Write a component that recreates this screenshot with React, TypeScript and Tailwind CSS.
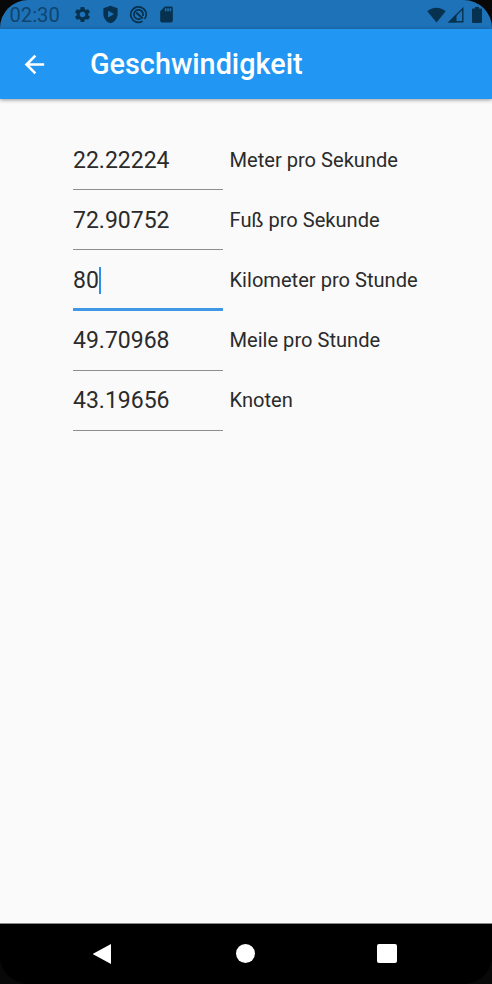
import { useState } from 'react';
import { MdSettings, MdSdCard } from 'react-icons/md';

interface Unit {
  id: string;
  label: string;
  value: string;
}

const units: Unit[] = [
  { id: 'mps', label: 'Meter pro Sekunde', value: '22.22224' },
  { id: 'fps', label: 'Fuß pro Sekunde', value: '72.90752' },
  { id: 'kmh', label: 'Kilometer pro Stunde', value: '80' },
  { id: 'mph', label: 'Meile pro Stunde', value: '49.70968' },
  { id: 'kn', label: 'Knoten', value: '43.19656' },
];

function StatusBar() {
  return (
    <div className="flex h-[29px] shrink-0 items-center bg-[#1e72b8] pr-[10px] pl-[9.5px] text-[#06324f]">
      <span className="w-[63.5px] pt-[2px] text-[20.2px] leading-none text-[#0f4570]">02:30</span>
      <MdSettings className="h-[19px] w-[19px]" />
      <svg viewBox="0 0 24 24" className="ml-[9px] h-[19px] w-[19px]" fill="currentColor">
        <path fillRule="evenodd" d="M12 1L3 4v7c0 5.6 3.8 10.7 9 12 5.2-1.3 9-6.4 9-12V4zM9 7.2l7.5 4.3L9 15.8z" />
      </svg>
      <svg viewBox="0 0 24 24" className="ml-[9px] h-[19px] w-[19px]" fill="none" stroke="currentColor">
        <path strokeWidth="2.2" d="M17 20.5A9.8 9.8 0 1 1 21.8 12c0 2.3-.8 4-2.3 5.5" />
        <path strokeWidth="2.2" d="M14.5 17.2A5.8 5.8 0 1 1 17.8 12v2" />
        <path strokeWidth="2.6" d="M9 9.5L17.5 17" />
      </svg>
      <MdSdCard className="ml-[9px] h-[19px] w-[19px]" />
      <div className="ml-auto flex items-center">
        <svg viewBox="0 0 19 16" className="h-[16px] w-[19px]" fill="currentColor">
          <path d="M9.5 15.5L.3 4.2C2.8 1.9 6 .7 9.5.7s6.7 1.2 9.2 3.5z" />
        </svg>
        <svg viewBox="0 0 16 16" className="ml-[2px] h-[16px] w-[16px]">
          <path fill="currentColor" d="M0 15.5L8.5 7v8.5z" />
          <path fill="none" stroke="currentColor" strokeWidth="1.4" d="M1.6 14.8L14.8 1.6v13.2z" />
        </svg>
        <svg viewBox="0 0 10 16" className="ml-[8px] h-[16px] w-[10px]" fill="currentColor">
          <path d="M3 0h4v1.5h2q1 0 1 1V15q0 1-1 1H1q-1 0-1-1V2.5q0-1 1-1h2z" />
        </svg>
      </div>
    </div>
  );
}

function AppBar({ title }: { title: string }) {
  return (
    <header className="z-10 flex h-[70px] shrink-0 items-center bg-[#2196f3] pt-px pl-[20px] text-white shadow-[0_1px_4px_rgba(0,0,0,0.4)]">
      <button type="button" aria-label="Zurück" className="w-[70px]">
        <svg viewBox="0 0 24 24" className="h-[29px] w-[29px]" fill="none" stroke="currentColor" strokeWidth="2.2">
          <path d="M20 12H5.500M12.700 4.700L5.400 12l7.300 7.300" />
        </svg>
      </button>
      <h1 className="text-[28.8px] leading-none font-medium">{title}</h1>
    </header>
  );
}

interface UnitRowProps {
  unit: Unit;
  focused: boolean;
  onFocus: () => void;
}

function UnitRow({ unit, focused, onFocus }: UnitRowProps) {
  return (
    <div className="flex h-[60.2px] items-start text-[#2b2b2b]" onClick={onFocus}>
      <div
        className={
          focused
            ? 'flex h-[61px] w-[150px] items-center border-b-[3px] border-[#3f97e6] pt-[3px]'
            : 'flex h-[60px] w-[150px] items-center border-b border-[#8e8e8e] pt-[2px]'
        }
      >
        <span className="text-[23px] leading-[28px]">{unit.value}</span>
        {focused && <span className="h-[27px] w-[2px] bg-[#2f8fe6]" />}
      </div>
      <span className="ml-[6.5px] flex h-[59.5px] items-center text-[20.1px]">{unit.label}</span>
    </div>
  );
}

export default function App() {
  const [focusedId, setFocusedId] = useState('kmh');

  return (
    <div className="h-[984px] w-[492px] bg-[#080808]">
      <div className="flex h-full flex-col overflow-hidden rounded-[28px] font-['Roboto',sans-serif]">
        <StatusBar />
        <AppBar title="Geschwindigkeit" />

        <main className="flex-1 bg-[#fafafa] pt-[31px] pl-[73px]">
          {units.map(unit => (
            <UnitRow
              key={unit.id}
              unit={unit}
              focused={focusedId === unit.id}
              onFocus={() => setFocusedId(unit.id)}
            />
          ))}
        </main>

        {/* System navigation */}
        <nav className="flex h-[61px] shrink-0 items-center border-t border-[#8a8a8a] bg-black pb-px pl-[93px]">
          <svg viewBox="0 0 18 20" className="h-[20px] w-[18px]" fill="white">
            <path d="M18 0v20L.5 10.6q-1-.6 0-1.2z" />
          </svg>
          <div className="ml-[125px] h-[19px] w-[19px] rounded-full bg-white" />
          <div className="ml-[122px] h-[19px] w-[20px] rounded-[2px] bg-white" />
        </nav>
      </div>
    </div>
  );
}
